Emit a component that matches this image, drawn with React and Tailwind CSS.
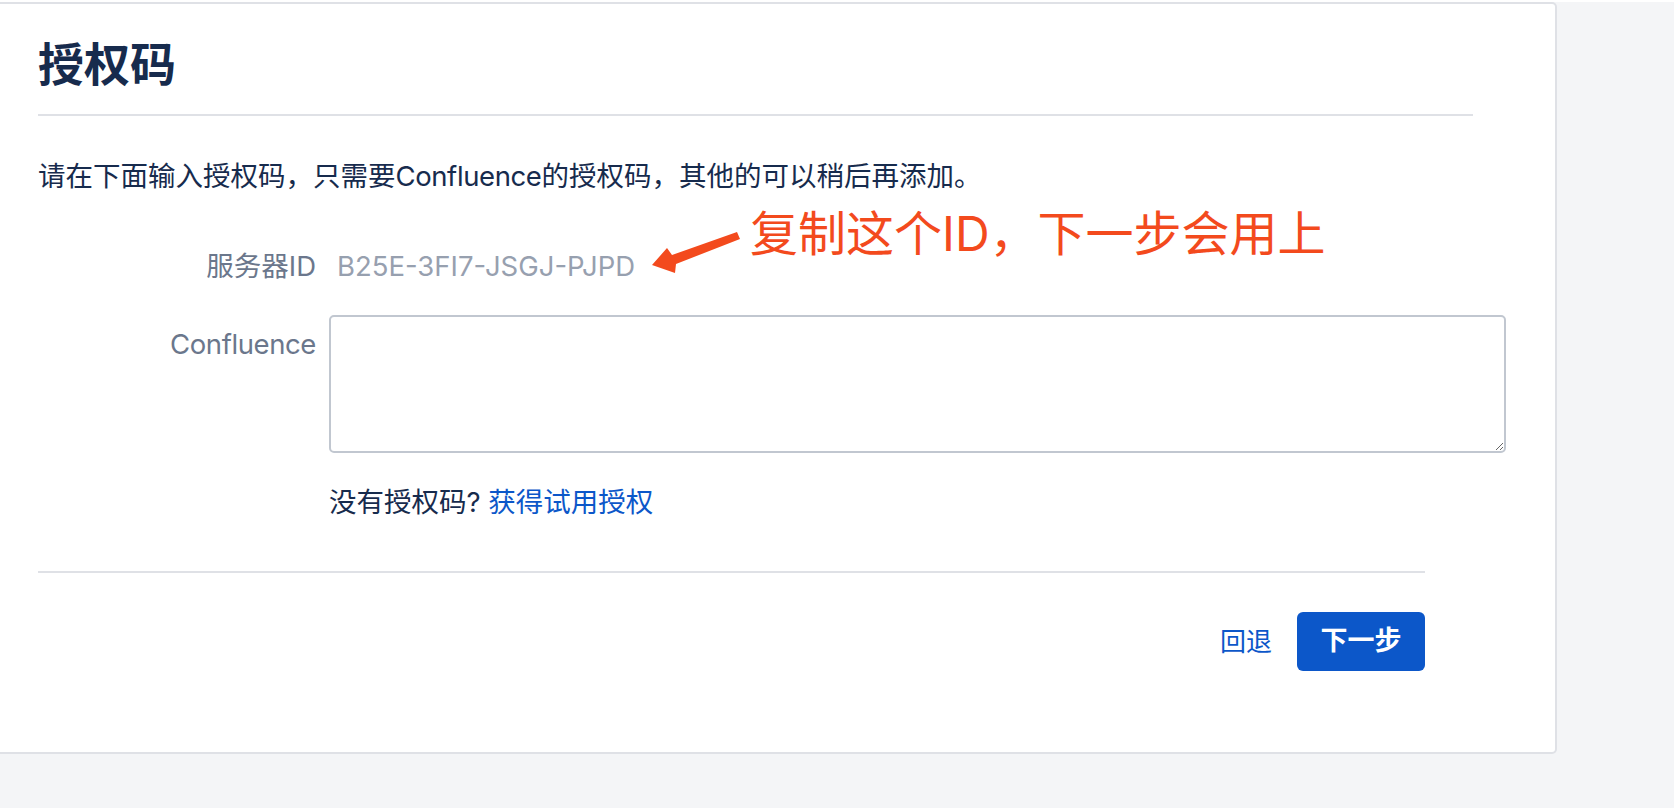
function Arrow() {
  return (
    <svg className="absolute left-[645px] top-[223px]" width="100" height="55" viewBox="0 0 100 55">
      <polygon
        points="92,5 95,12 31,37 30,46 7,38 22,21 27,28"
        fill="#f34a1d"
      />
    </svg>
  );
}

function LicenseForm() {
  return (
    <div className="relative mt-[2px] w-[1557px] rounded-r-[5px] border-y-2 border-r-2 border-[#dfe1e6] bg-white pb-[81px] pl-[38px] pt-[32px]">
      <h1 className="text-[46px] font-bold leading-[56px] text-[#172b4d]">授权码</h1>
      <div className="mt-[22px] h-[2px] w-[1435px] bg-[#dfe1e6]" />

      <p className="mt-[39px] text-[27.5px] leading-[42px] text-[#172b4d]">
        请在下面输入授权码，只需要<span className="tracking-[-0.4px]">Confluence</span>的授权码，其他的可以稍后再添加。
      </p>

      <div className="mt-[48px] grid grid-cols-[278px_1177px] gap-x-[13px]">
        <div className="text-right text-[27.5px] leading-[42px] text-[#6b778c]">服务器ID</div>
        <div className="pl-2 text-[27.5px] leading-[42px] text-[#97a0af]">B25E-3FI7-JSGJ-PJPD</div>

        <div className="mt-[28px] pt-[8px] text-right text-[27.5px] leading-[42px] tracking-[-0.4px] text-[#6b778c]">Confluence</div>
        <textarea className="mt-[28px] block h-[138px] w-[1177px] resize rounded-[5px] border-2 border-[#c1c7d0] bg-white px-3 py-2 text-[27.5px] outline-none" />

        <div />
        <div className="mt-[28px] text-[27.5px] leading-[42px] text-[#172b4d]">
          没有授权码? <a className="text-[#0c57c9]" href="#">获得试用授权</a>
        </div>
      </div>

      <div className="mt-[48px] h-[2px] w-[1387px] bg-[#dfe1e6]" />

      <div className="mt-[39px] flex w-[1387px] items-center justify-end gap-[25px]">
        <a className="text-[26px] leading-[40px] text-[#0c57c9]" href="#">回退</a>
        <button
          type="button"
          className="h-[59px] w-[128px] rounded-[6px] bg-[#0c57c9] text-[27px] font-bold text-white"
        >
          下一步
        </button>
      </div>

      <Arrow />
      <div className="absolute left-[750px] top-[202px] text-[48px] leading-[56px] text-[#f34a1d]">
        复制这个ID，下一步会用上
      </div>
    </div>
  );
}

export default function App() {
  return (
    <div
      className="min-h-screen bg-[#f4f5f7]"
      style={{ fontFamily: 'Inter, "Noto Sans CJK SC", sans-serif' }}
    >
      <LicenseForm />
    </div>
  );
}
